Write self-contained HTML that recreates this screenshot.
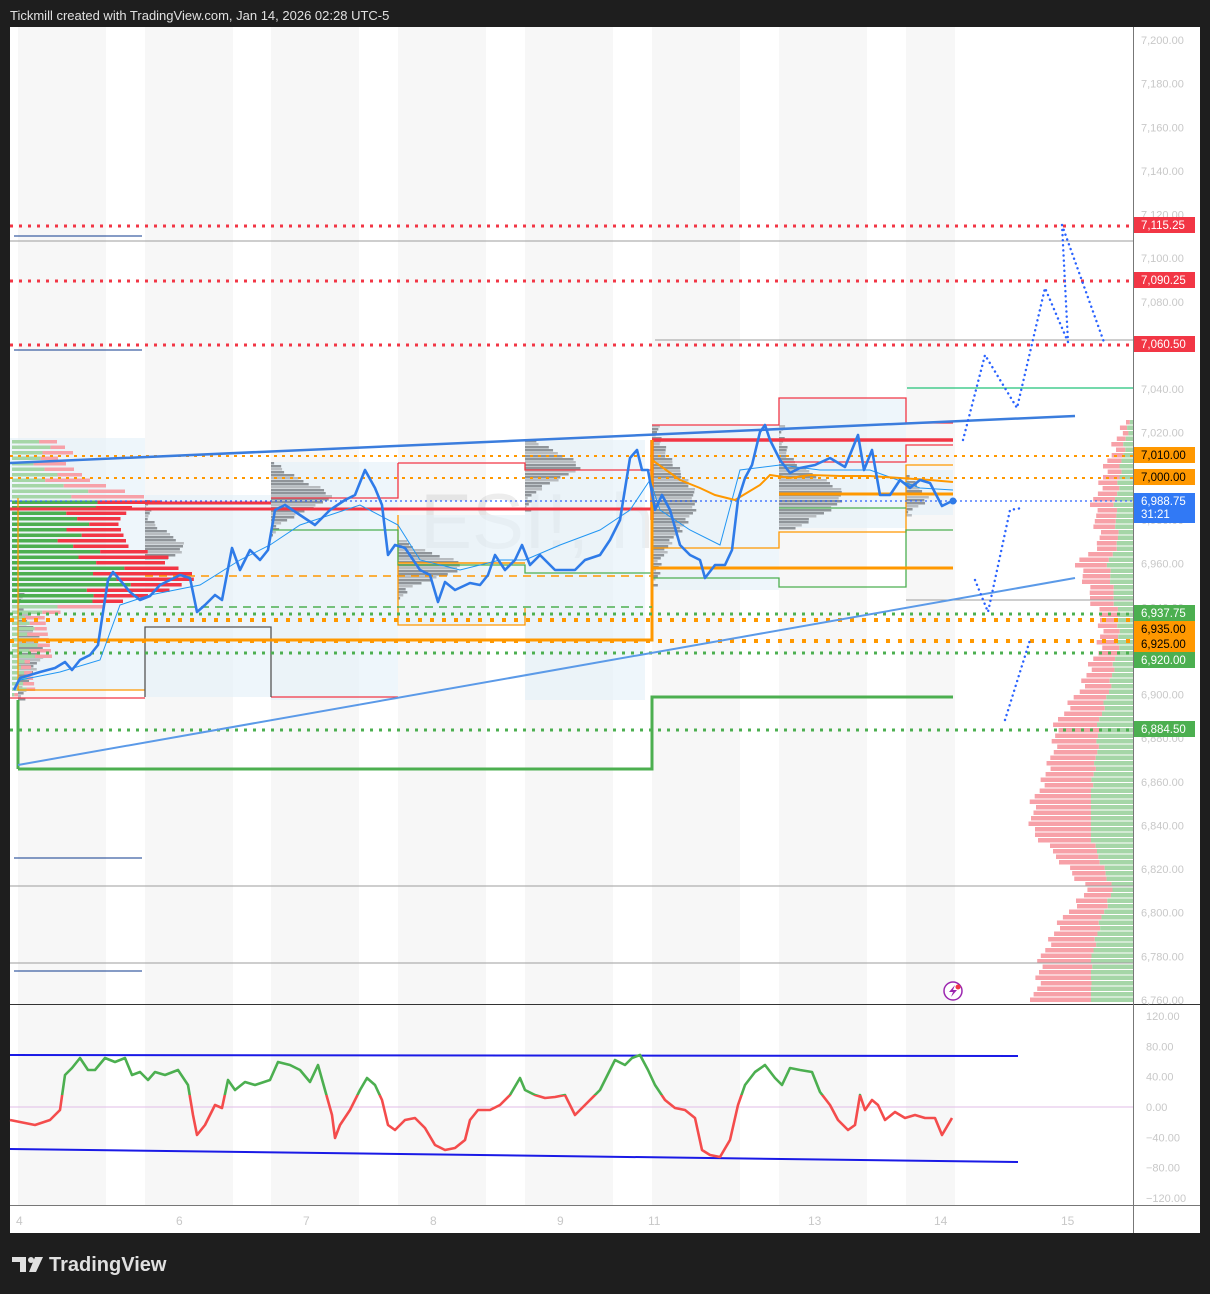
<!DOCTYPE html>
<html><head><meta charset="utf-8"><style>
html,body{margin:0;padding:0;background:#1e1e1e;width:1210px;height:1294px;overflow:hidden;font-family:"Liberation Sans",sans-serif}
svg{display:block}
</style></head><body>
<svg id="s" width="1210" height="1294" viewBox="0 0 1210 1294" xmlns="http://www.w3.org/2000/svg" font-family="Liberation Sans, sans-serif">
<rect width="1210" height="1294" fill="#1e1e1e"/>
<text x="10" y="20" font-size="13" fill="#e0e0e0">Tickmill created with TradingView.com, Jan 14, 2026 02:28 UTC-5</text>
<rect x="10" y="27" width="1190" height="1206" fill="#fff"/>
<g id="bands" fill="#f7f7f7"></g>
<text x="420" y="548" font-size="78" fill="#000" fill-opacity="0.07">ESI!, h</text>
<g fill="#e3f0f8" fill-opacity="0.6">
<rect x="10" y="438" width="135" height="252"/>
<rect x="145" y="495" width="126" height="202"/>
<rect x="271" y="462" width="127" height="238"/>
<rect x="398" y="515" width="127" height="110"/>
<rect x="525" y="440" width="120" height="260"/>
<rect x="652" y="425" width="127" height="165"/>
<rect x="779" y="398" width="127" height="130"/>
<rect x="906" y="470" width="47" height="45"/>
</g>
<g id="hist"></g>
<g id="lprof"></g>
<g id="rprof"></g>
<g stroke="#9e9e9e" stroke-width="1">
<line x1="10" y1="241" x2="1133" y2="241"/><line x1="655" y1="340" x2="1133" y2="340"/>
<line x1="10" y1="886" x2="1133" y2="886"/><line x1="10" y1="963" x2="1133" y2="963"/>
<line x1="906" y1="600" x2="1133" y2="600"/>
</g>
<g stroke="#0d3a8c" stroke-width="1">
<line x1="14" y1="236" x2="142" y2="236"/><line x1="14" y1="350" x2="142" y2="350"/>
<line x1="14" y1="858" x2="142" y2="858"/><line x1="14" y1="971" x2="142" y2="971"/>
</g>
<line x1="907" y1="388" x2="1133" y2="388" stroke="#22c27a" stroke-width="1.2"/>
<g fill="none" stroke-width="1.3">
<path d="M398 463H525V470H652" stroke="#f23645"/>
<path d="M398 463V498H271" stroke="#f23645"/>
<path d="M652 425H779V398H906V423H953" stroke="#f23645"/>
<path d="M779 462H906V445H953" stroke="#f23645"/>
<path d="M10 698H145M271 697H398" stroke="#f23645"/>
<path d="M18 498V690H145" stroke="#ff9800"/>
<path d="M398 515V625H525V608" stroke="#ff9800"/>
<path d="M652 548H779V532H906V465H953" stroke="#ff9800"/>
<path d="M145 697V627H271V697" stroke="#555"/>
<path d="M271 530H398V565H525V573H652" stroke="#4caf50"/>
<path d="M652 578H779V587H906V530H953" stroke="#4caf50"/>
<path d="M779 508H906" stroke="#4caf50"/>
</g>
<g fill="none">
<path d="M145 503H271M10 509H652" stroke="#f23645" stroke-width="3"/>
<path d="M652 440H953" stroke="#f23645" stroke-width="3.5"/>
<path d="M652 440V520" stroke="#f23645" stroke-width="3.5"/>
<path d="M18 640H652V440" stroke="#ff9800" stroke-width="3"/>
<path d="M652 568H953M779 494H953" stroke="#ff9800" stroke-width="3"/>
<path d="M398 563H525" stroke="#ff9800" stroke-width="1.5"/>
<path d="M18 769H145" stroke="#ff9800" stroke-width="3"/>
<path d="M145 576H652" stroke="#ff9800" stroke-width="1.6" stroke-dasharray="8,6"/>
<path d="M145 607H652" stroke="#4caf50" stroke-width="1.6" stroke-dasharray="8,6"/>
<path d="M18 769H652V697H953" stroke="#4caf50" stroke-width="3"/>
<path d="M18 700V769" stroke="#4caf50" stroke-width="3"/>
</g>
<g fill="none" stroke-width="3" stroke-dasharray="3,6">
<path d="M10 226H1133M10 281H1133M10 345H1133" stroke="#f23645"/>
<path d="M10 614H1133M10 653H1133M10 730H1133" stroke="#4caf50"/>
</g>
<g fill="none" stroke="#ff9800" stroke-width="2" stroke-dasharray="3,5">
<path d="M10 456H1133M10 478H1133"/>
</g>
<path d="M10 620H1133M10 641H1133" fill="none" stroke="#ff9800" stroke-width="4" stroke-dasharray="4,8"/>
<path d="M10 501H1133" fill="none" stroke="#2962ff" stroke-width="1.2" stroke-dasharray="2,3"/>
<line x1="10" y1="463" x2="1075" y2="416" stroke="#3b7ddd" stroke-width="2.5"/>
<line x1="18" y1="765" x2="1075" y2="578" stroke="#5b9ae8" stroke-width="2"/>
<polyline fill="none" stroke="#2196f3" stroke-width="1" points="20,680 60,672 100,660 120,605 150,595 200,585 240,560 270,545 300,525 360,505 398,525 420,560 460,570 500,560 525,560 560,545 600,530 630,510 650,480 660,510 690,530 720,545 740,470 780,465 820,470 870,470 920,488 953,490"/>
<polyline fill="none" stroke="#ff9800" stroke-width="2" points="652,460 680,480 700,488 715,495 735,500 760,485 770,475 790,478 810,475 840,476 870,476 900,478 930,480 953,482"/>
<polyline fill="none" stroke="#2f7be8" stroke-width="2.6" stroke-linejoin="round" points="14,690 20,678 30,675 40,672 55,668 65,662 72,670 80,660 90,655 98,645 103,612 108,580 113,572 120,580 130,592 140,600 150,596 160,585 170,580 180,575 190,578 197,612 205,605 215,595 222,600 232,548 240,570 250,550 260,560 268,550 275,510 285,505 300,515 315,525 330,510 345,500 355,495 365,470 375,488 382,505 388,555 395,545 405,548 420,570 430,575 438,602 445,582 455,590 470,583 480,585 488,575 495,555 505,570 515,560 522,545 530,565 540,555 555,570 575,570 585,560 600,555 610,540 620,520 630,458 637,450 642,470 648,470 655,510 662,495 670,510 680,545 690,555 700,560 705,578 715,565 725,565 732,550 738,500 745,478 752,465 760,432 765,425 770,440 780,460 790,473 800,468 815,465 830,458 845,467 858,435 864,470 872,450 880,495 890,495 900,480 910,488 920,480 930,483 942,506 952,501"/>
<circle cx="953" cy="501" r="3.5" fill="#2f7be8"/>
<g fill="none" stroke="#2962ff" stroke-width="2.4" stroke-dasharray="0.1,5" stroke-linecap="round">
<path d="M963 440L985 355L1017 408L1045 288L1068 342L1062 225L1105 345"/>
<path d="M975 580L988 612L1010 510L1022 508"/>
<path d="M1005 720L1030 640"/>
</g>
<circle cx="953" cy="991" r="9" fill="#fff" stroke="#9c27b0" stroke-width="1.5"/>
<path d="M955 985L949 992H953L951 997L957 990H953Z" fill="#9c27b0"/>
<circle cx="958" cy="987" r="2.5" fill="#f23645"/>
<line x1="10" y1="1004.5" x2="1200" y2="1004.5" stroke="#333" stroke-width="1"/>
<line x1="1133.5" y1="27" x2="1133.5" y2="1233" stroke="#777" stroke-width="1"/>
<line x1="10" y1="1205.5" x2="1200" y2="1205.5" stroke="#777" stroke-width="1"/>
<line x1="10" y1="1107" x2="1133" y2="1107" stroke="#e1bee7" stroke-width="1"/>
<line x1="10" y1="1055" x2="1018" y2="1056" stroke="#1a1ae6" stroke-width="2"/>
<line x1="10" y1="1149" x2="1018" y2="1162" stroke="#1a1ae6" stroke-width="2"/>
<defs>
<clipPath id="up"><rect x="0" y="1000" width="1133" height="95"/></clipPath>
<clipPath id="dn"><rect x="0" y="1095" width="1133" height="110"/></clipPath>
</defs>
<g id="rsi" fill="none" stroke-width="2.6" stroke-linejoin="round"></g>
<g id="axis" font-size="11" fill="#c8c8c8"></g>
<g font-size="12" fill="#c8c8c8">
<text x="16" y="1225">4</text><text x="176" y="1225">6</text><text x="303" y="1225">7</text><text x="430" y="1225">8</text><text x="557" y="1225">9</text><text x="648" y="1225">11</text><text x="808" y="1225">13</text><text x="934" y="1225">14</text><text x="1061" y="1225">15</text>
</g>
<g id="tags" font-size="11.5"></g>
<g fill="#e0e0e0">
<path d="M12 1257H26V1272H20V1262H12Z"/>
<circle cx="31" cy="1260" r="3"/>
<path d="M35 1257H43L36 1272H29Z"/>
</g>
<text x="49" y="1271" font-size="20" font-weight="bold" fill="#e0e0e0">TradingView</text>
</svg>
<script>
var NS="http://www.w3.org/2000/svg";
function el(p,t,a,txt){var e=document.createElementNS(NS,t);for(var k in a)e.setAttribute(k,a[k]);if(txt!=null)e.textContent=txt;document.getElementById(p).appendChild(e);return e;}
[18,145,271,398,525,652,779,906].forEach(function(x,i){el("bands","rect",{x:x,y:27,width:i==7?49:88,height:1178});});
function P(p){return 40+(7200-p)*960/440;}
for(var p=7200;p>=6760;p-=20){el("axis","text",{x:1141,y:P(p)+4},p.toLocaleString("en-US")+".00");}
[[120,"120.00"],[80,"80.00"],[40,"40.00"],[0,"0.00"],[-40,"\u221240.00"],[-80,"\u221280.00"],[-120,"\u2212120.00"]].forEach(function(v){el("axis","text",{x:1146,y:1016+(120-v[0])*0.758+4},v[1]);});
[[225,"7,115.25","#f23645","#fff"],[280,"7,090.25","#f23645","#fff"],[344,"7,060.50","#f23645","#fff"],[455,"7,010.00","#ff9800","#000"],[477,"7,000.00","#ff9800","#000"],[613,"6,937.75","#4caf50","#fff"],[629,"6,935.00","#ff9800","#000"],[644,"6,925.00","#ff9800","#000"],[660,"6,920.00","#4caf50","#fff"],[729,"6,884.50","#4caf50","#fff"]].forEach(function(t){el("tags","rect",{x:1134,y:t[0]-8,width:61,height:16,fill:t[2]});el("tags","text",{x:1141,y:t[0]+4,fill:t[3]},t[1]);});
el("tags","rect",{x:1134,y:493,width:61,height:30,fill:"#3179f5"});
el("tags","text",{x:1141,y:505,fill:"#fff"},"6,988.75");
el("tags","text",{x:1141,y:518,fill:"#fff"},"31:21");
function lerp(pts,y){for(var i=0;i<pts.length-1;i++){if(y>=pts[i][0]&&y<=pts[i+1][0]){var t=(y-pts[i][0])/(pts[i+1][0]-pts[i][0]);return pts[i][1]+t*(pts[i+1][1]-pts[i][1]);}}return 0;}
var rp=[[420,5],[440,18],[470,28],[500,40],[540,32],[560,55],[590,45],[620,30],[650,35],[690,55],[720,75],[760,82],[800,100],[830,100],[860,70],[890,45],[910,65],[950,90],[1000,100]];
for(var y=420;y<1000;y+=5.5){var w=lerp(rp,y)+((y*7)%9)-4;if(w<4)w=4;var g=Math.min(w*0.45,42);el("rprof","rect",{x:1133-w,y:y,width:w-g,height:4.5,fill:"#f7a1a8"});el("rprof","rect",{x:1133-g,y:y,width:g,height:4.5,fill:"#a5d6a7"});}
var lp=[[440,40],[480,80],[500,140],[520,110],[545,110],[560,160],[575,190],[590,150],[600,100],[615,40],[690,20]];
for(var y=440;y<695;y+=5.5){var w=lerp(lp,y)+((y*13)%23)-11;if(w<6)w=6;var g=w*(0.4+((y*3)%7)/20);var dark=y>495&&y<605;el("lprof","rect",{x:12,y:y,width:g,height:3.5,fill:dark?"#4caf50":"#a5d6a7"});el("lprof","rect",{x:12+g,y:y,width:w-g,height:3.5,fill:dark?"#f23645":"#f7a1a8"});}
function hist(x0,top,bot,poc,mx){for(var y=top;y<bot;y+=3){var d=Math.abs(y-poc)/(bot-top);var w=mx*Math.exp(-d*d*14)+((y*11)%7);el("hist","rect",{x:x0,y:y,width:w,height:2.5,fill:(Math.floor(y/3)%3==0)?"#b8bcc0":"#8f9499"});}}
hist(145,497,560,545,35);hist(271,462,535,495,55);hist(398,540,600,565,60);hist(525,440,510,465,50);hist(652,425,585,500,40);hist(779,425,528,495,60);hist(906,475,515,495,20);hist(18,590,700,650,20);
var r="10,1120 20,1122 35,1125 50,1120 60,1110 65,1075 72,1068 80,1058 88,1070 95,1070 105,1058 115,1062 125,1058 132,1075 140,1072 148,1080 155,1072 165,1075 178,1070 188,1085 193,1115 197,1135 205,1125 215,1105 222,1108 228,1080 235,1090 245,1082 255,1085 270,1080 278,1062 290,1065 300,1070 310,1082 318,1065 325,1090 332,1115 335,1138 340,1125 350,1110 360,1090 367,1078 375,1085 382,1100 388,1125 395,1130 405,1120 415,1118 425,1128 435,1145 445,1150 455,1148 465,1140 470,1120 478,1110 490,1110 500,1105 510,1095 520,1078 525,1090 535,1095 545,1098 555,1097 565,1095 575,1115 585,1105 600,1090 615,1060 625,1065 632,1058 640,1055 648,1070 655,1085 665,1100 675,1108 685,1110 695,1118 702,1150 710,1155 720,1157 730,1140 738,1105 745,1085 755,1072 765,1065 775,1078 782,1085 790,1068 800,1070 812,1072 820,1092 830,1105 838,1120 848,1130 855,1125 860,1095 865,1110 872,1100 878,1105 885,1120 895,1112 905,1118 915,1115 925,1118 935,1118 942,1135 952,1118";
el("rsi","polyline",{points:r,stroke:"#4caf50","clip-path":"url(#up)"});
el("rsi","polyline",{points:r,stroke:"#f44c4c","clip-path":"url(#dn)"});
</script>
</body></html>
